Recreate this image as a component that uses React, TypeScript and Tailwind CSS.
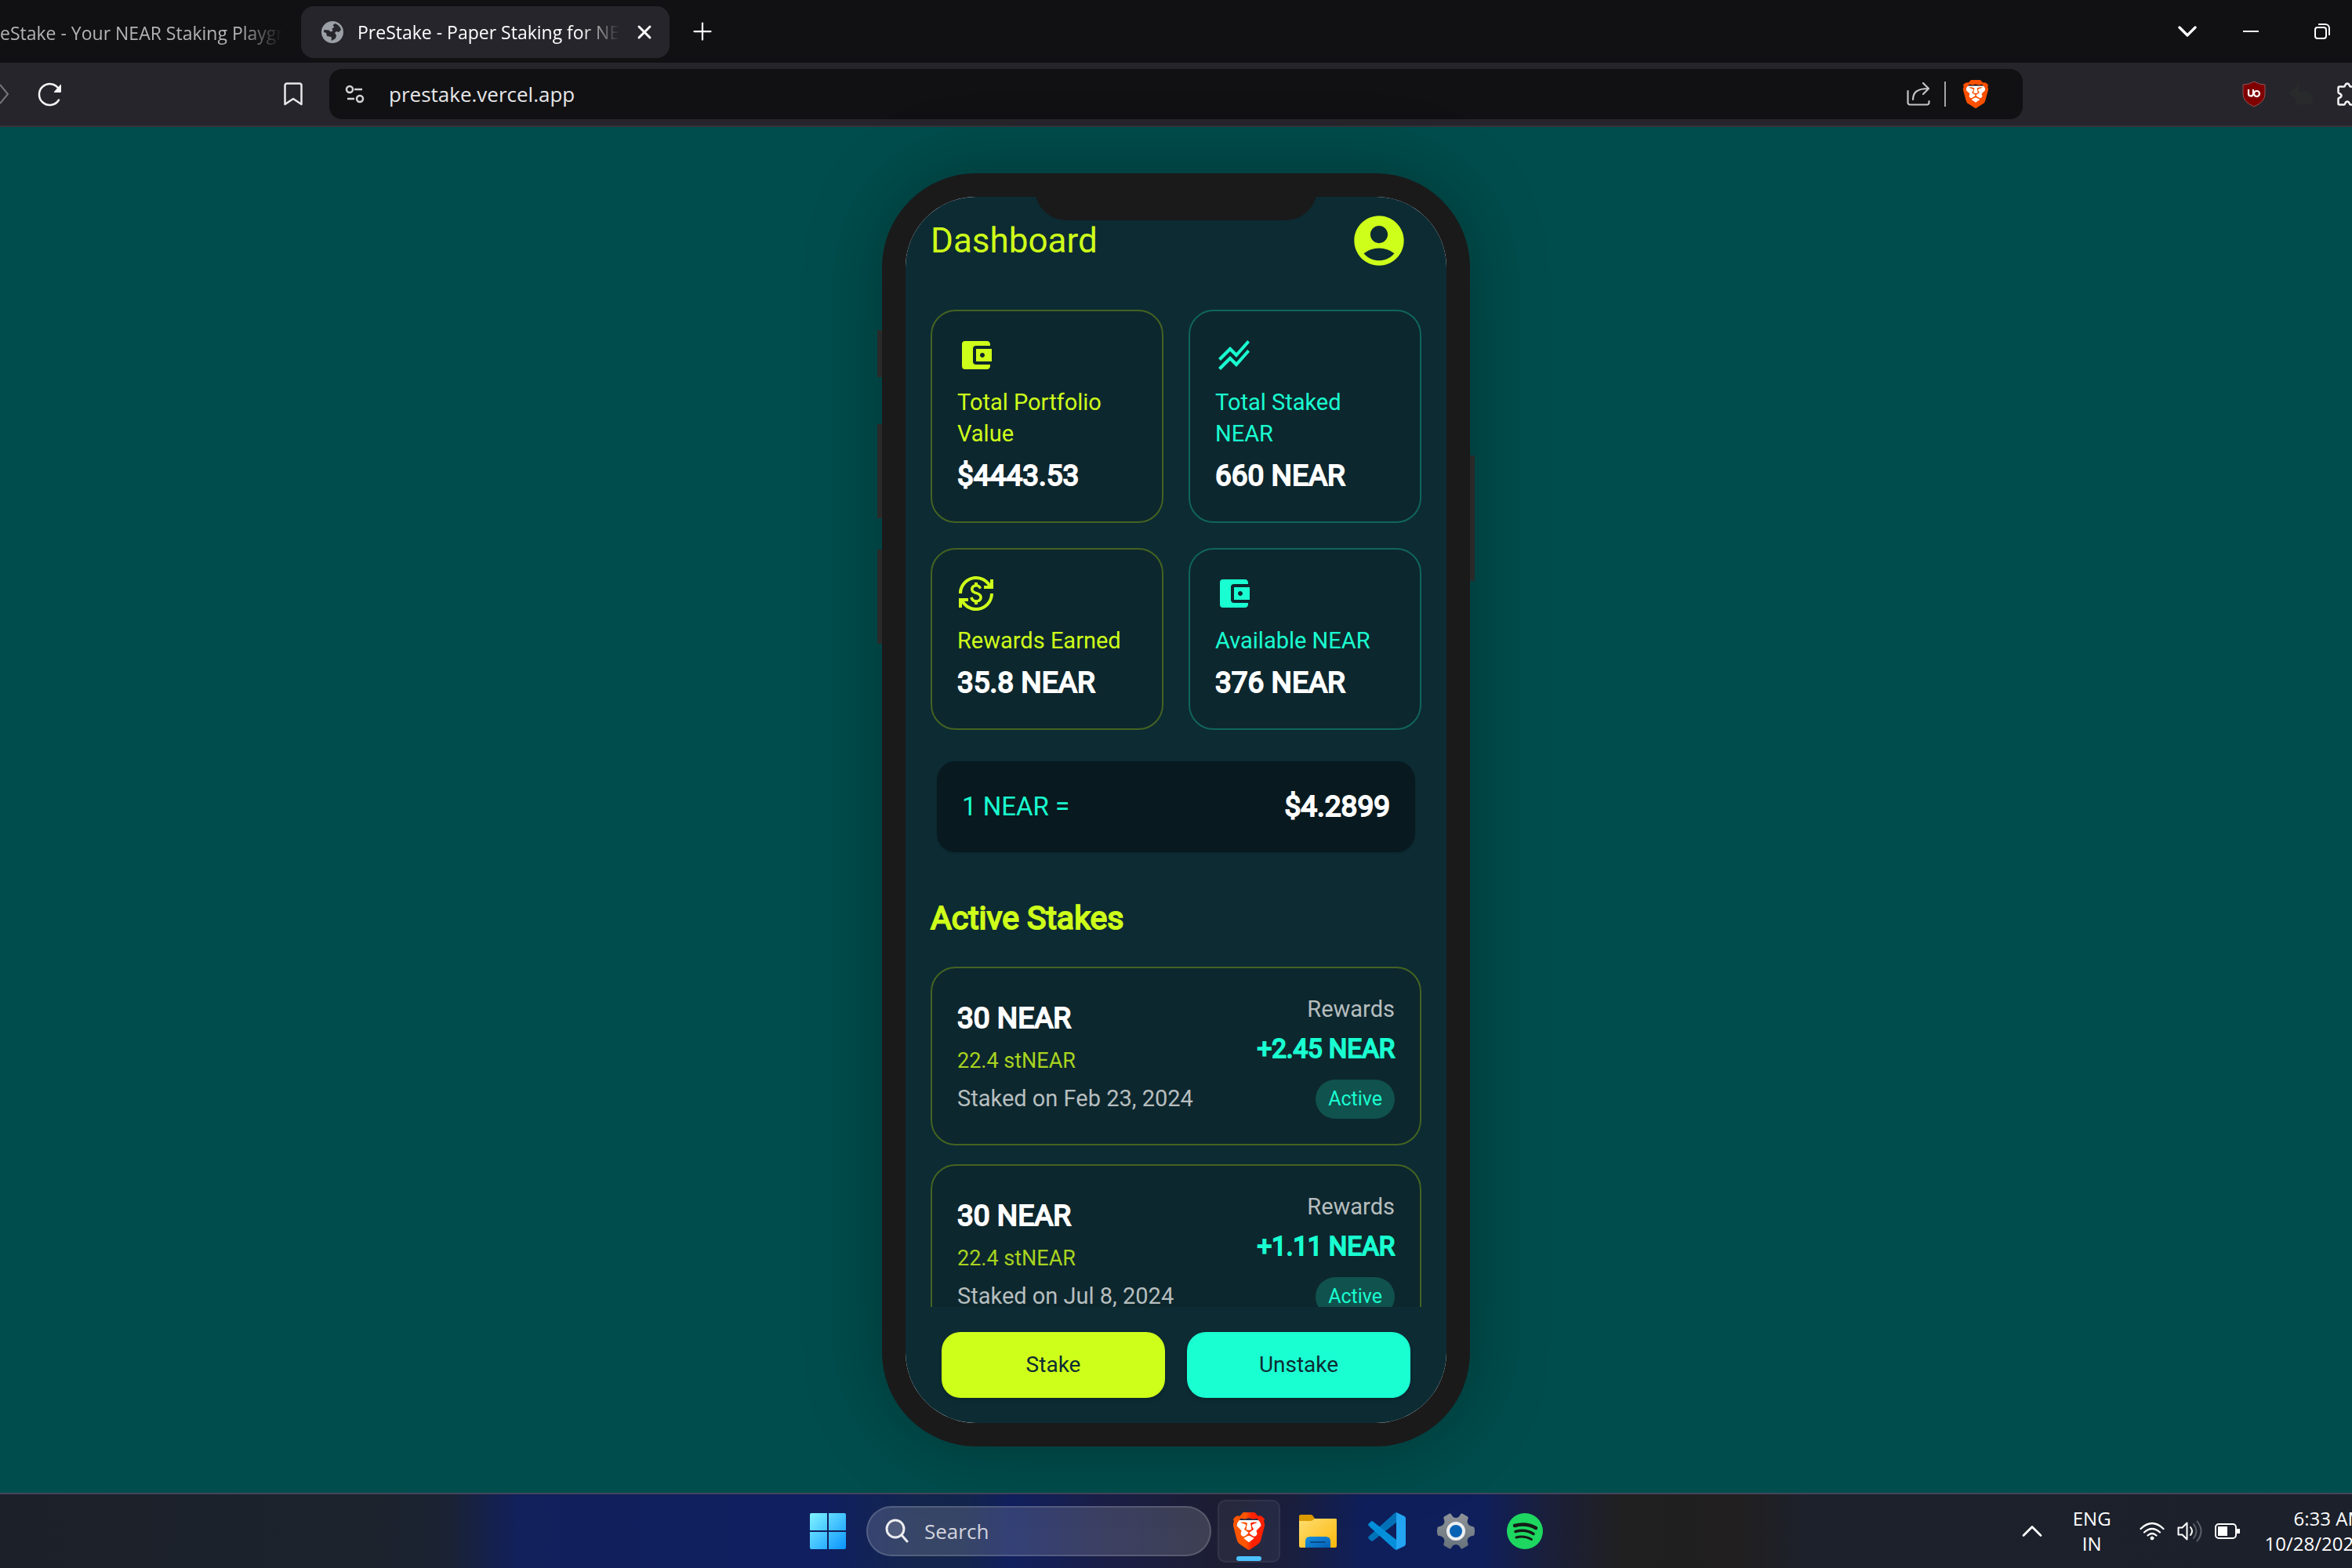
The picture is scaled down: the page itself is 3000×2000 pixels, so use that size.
import React from 'react';
import { MdAccountBalanceWallet, MdAccountCircle, MdCurrencyExchange, MdStackedLineChart } from 'react-icons/md';
import { SiBrave } from 'react-icons/si';
import { ChevronDown, ChevronUp, Plus, X } from 'lucide-react';

interface StatCardProps {
  icon: React.ReactNode;
  label: string;
  value: string;
  tone: 'lime' | 'aqua';
}

interface StakeCardProps {
  amount: string;
  staked: string;
  date: string;
  reward: string;
}

const tones = {
  lime: 'border-[#446322] text-[#ceff1a]',
  aqua: 'border-[#10655c] text-[#1affd1]',
};

const StatCard: React.FC<StatCardProps> = ({ icon, label, value, tone }) => (
  <div className={`rounded-[32px] border-2 bg-[#0d272e] p-8 ${tones[tone]}`}>
    <div className="mb-4">{icon}</div>
    <p className="text-[29px] leading-10">{label}</p>
    <p className="mt-2 text-[37px] leading-[52px] text-white [-webkit-text-stroke:2px]">{value}</p>
  </div>
);

const StakeCard: React.FC<StakeCardProps> = ({ amount, staked, date, reward }) => (
  <div className="flex items-center justify-between rounded-[32px] border-2 border-[#446322] bg-[#0d272e] p-8">
    <div className="flex flex-col gap-[10px]">
      <p className="text-[37px] leading-[52px] text-white [-webkit-text-stroke:2px]">{amount}</p>
      <p className="text-[27px] leading-9 text-[#a8d41f]">{staked}</p>
      <p className="text-[29px] leading-10 text-[#b6bebf]">{date}</p>
    </div>
    <div className="flex flex-col items-end">
      <p className="text-[29px] leading-10 text-[#b6bebf]">Rewards</p>
      <p className="mt-2 text-[33px] leading-[46px] text-[#1affd1] [-webkit-text-stroke:2px]">{reward}</p>
      <span className="mt-4 rounded-full bg-[#10524e] px-4 text-[25px] leading-[50px] text-[#1affd1]">Active</span>
    </div>
  </div>
);

const BraveLogo = ({ className, from, to }: { className: string; from: string; to: string }) => (
  <svg viewBox="2 0 20 24" preserveAspectRatio="none" className={className}>
    <defs>
      <linearGradient id={`brave-${to.slice(1)}`}>
        <stop offset="0.4" stopColor={from} />
        <stop offset="0.6" stopColor={to} />
      </linearGradient>
    </defs>
    <path fill="#fff" d="M5 5h14l1 4-3 8-5 4-5-4-3-8z" />
    <SiBrave size={24} fill={`url(#brave-${to.slice(1)})`} />
  </svg>
);

const GlobeIcon = () => (
  <svg viewBox="0 0 28 28" className="size-7 shrink-0">
    <circle cx="14" cy="14" r="14" fill="#9aa0a6" />
    <path
      fill="#26252b"
      d="M17 3c4 1 7 4 8 8l-3 3-3-1-2 2 2 3-1 4-5 3c-1-2 1-4-1-5l-5-1-1-4-3-1c0-1 0-2 .5-3l6 .5 2 2 3-1-1-3 3-2-2-2z"
    />
  </svg>
);

const TopBar = () => (
  <header className="bg-[#111113] text-white" style={{ fontFamily: '"Open Sans", sans-serif' }}>
    <div className="flex h-20 items-center">
      <a
        href="#playground"
        className="mt-1 mr-6 w-[360px] overflow-hidden mask-r-from-85% text-[23px] leading-8 whitespace-nowrap text-[#b3b3b5]"
      >
        eStake - Your NEAR Staking Playground
      </a>
      <div className="mt-[2px] flex h-[66px] w-[470px] items-center rounded-[16px] bg-[#26252b] pr-[18px] pl-[26px]">
        <GlobeIcon />
        <span className="ml-[18px] w-[334px] overflow-hidden mask-r-from-85% text-[23px] leading-8 whitespace-nowrap">
          PreStake - Paper Staking for NEAR
        </span>
        <button aria-label="Close tab" className="ml-auto">
          <X className="size-7" strokeWidth={2.5} />
        </button>
      </div>
      <button aria-label="New tab" className="ml-6">
        <Plus className="size-9" strokeWidth={1.5} />
      </button>
      <div className="ml-auto flex items-center pr-7">
        <button aria-label="Search tabs" className="mr-[51px]">
          <ChevronDown className="size-10" strokeWidth={2} />
        </button>
        <button aria-label="Minimize" className="mr-[71px] py-2">
          <span className="block h-[2px] w-5 bg-white" />
        </button>
        <button aria-label="Restore">
          <svg viewBox="0 0 20 20" className="size-5" fill="none" stroke="#fff" strokeWidth="2">
            <rect x="1" y="5" width="14" height="14" rx="3" />
            <path d="M5 1h9a5 5 0 0 1 5 5v9" />
          </svg>
        </button>
      </div>
    </div>

    <div className="flex h-[82px] items-center border-b-2 border-[#33323a] bg-[#26252b]">
      <button aria-label="Forward">
        <svg viewBox="0 0 12 28" className="h-7 w-3" fill="none" stroke="#77767c" strokeWidth="2">
          <path d="M0 2l10 12L0 26" />
        </svg>
      </button>
      <button aria-label="Reload" className="ml-9">
        <svg viewBox="0 0 32 32" className="size-8" fill="none" stroke="#f4f4f5" strokeWidth="2.500" strokeLinecap="round">
          <path d="M27 23.500a13.500 13.500 0 1 1 0-14" />
          <path d="M30 5v8q0 1-1 1h-7q-2 0-1-1l8-9q1-1 1 1z" fill="#f4f4f5" stroke="none" />
        </svg>
      </button>
      <button aria-label="Bookmark" className="ml-[282px]">
        <svg viewBox="0 0 24 30" className="h-[30px] w-6" fill="none" stroke="#e8e8ea" strokeWidth="2.500">
          <path d="M4 1.500h16a2.500 2.500 0 0 1 2.500 2.500v24L12 21 1.500 28V4A2.500 2.500 0 0 1 4 1.500z" strokeLinejoin="round" />
        </svg>
      </button>
      <div className="ml-[34px] flex h-16 w-[2160px] items-center rounded-[16px] bg-[#111113] pr-11 pl-5">
        <button aria-label="Site settings">
          <svg viewBox="0 0 26 24" className="h-6 w-[26px]" fill="none" stroke="#d4d4d6" strokeWidth="2.500">
            <circle cx="6" cy="6" r="4" />
            <path d="M12 6h10M3 18h9" />
            <circle cx="19" cy="18" r="4" />
          </svg>
        </button>
        <input
          aria-label="Address"
          defaultValue="prestake.vercel.app"
          className="ml-[30px] min-w-0 flex-1 bg-transparent text-[26px] leading-9 text-[#e6e6e8] outline-none"
        />
        <button aria-label="Share">
          <svg viewBox="0 0 30 30" className="size-[30px]" fill="none" stroke="#c4c4c6" strokeWidth="2.200" strokeLinecap="round" strokeLinejoin="round">
            <path d="M1.500 11v15a2.500 2.500 0 0 0 2.500 2.500h22a2.500 2.500 0 0 0 2.500-2.500v-2" />
            <path d="M8 22c0-9 5-14 19.500-14M21 1l7 7-7 7" />
          </svg>
        </button>
        <span className="mx-[18px] h-8 w-[2px] bg-[#a4a4a6]" />
        <button aria-label="Brave Shields" className="ml-1">
          <BraveLogo className="h-9 w-8" from="#ff5000" to="#fb4f00" />
        </button>
      </div>
      <div className="ml-auto flex items-center">
        <button aria-label="uBlock Origin" className="mr-[30px]">
          <svg viewBox="0 0 30 34" className="h-[34px] w-[30px]">
            <path d="M15 1q7 4 14 4v12q0 10-14 16Q1 27 1 17V5q7 0 14-4z" fill="#800000" stroke="#8d5558" />
            <g fill="none" stroke="#fff" strokeWidth="2.200">
              <path d="M8 11v5.500a3 3 0 0 0 6 0V11" />
              <circle cx="18.500" cy="16.500" r="3.500" />
            </g>
          </svg>
        </button>
        <button aria-label="Rabbit" className="mr-[29px]">
          <svg viewBox="0 0 32 30" className="h-[30px] w-8" fill="#292a2b">
            <path d="M8 8l4-8 2 1-2 9c4 4 6 2 10 2 6 1 9 5 8 10l-1 6H12l-4 2 1-8-3-3-6-4c1-4 4-6 8-7z" />
          </svg>
        </button>
        <button aria-label="Extensions" className="w-[19px] overflow-hidden">
          <svg viewBox="0 0 30 30" className="size-[30px]" fill="none" stroke="#f2f2f3" strokeWidth="2.500" strokeLinejoin="round">
            <path d="M3 5.500h6c1.500 0 1-4 4-4s2.500 4 4 4h7v7c0 1.500 4 1 4 4s-4 2.500-4 4v8h-7c-1.500 0-1-4-4-4s-2.500 4-4 4H3a1.500 1.500 0 0 1-1.500-1.500V21c0-1.500 4-1 4-4s-4-2.500-4-4V7A1.500 1.500 0 0 1 3 5.500z" />
          </svg>
        </button>
      </div>
    </div>
  </header>
);

const Phone = () => (
  <div
    className="relative h-[1624px] w-[750px] rounded-[120px] shadow-[0_0_100px_rgba(0,0,0,0.3)]"
    style={{ fontFamily: 'Roboto, sans-serif' }}
  >
    {/* Side buttons */}
    <span className="absolute top-[200px] -left-[6px] h-[60px] w-[6px] bg-[#2a2a2a]" />
    <span className="absolute top-[320px] -left-[6px] h-[120px] w-[6px] bg-[#2a2a2a]" />
    <span className="absolute top-[480px] -left-[6px] h-[120px] w-[6px] bg-[#2a2a2a]" />
    <span className="absolute top-[360px] -right-[6px] h-[160px] w-[6px] bg-[#2a2a2a]" />

    <div className="h-full rounded-[120px] border-[30px] border-[#1a1a1a] bg-white">
      <div className="flex h-full flex-col overflow-hidden rounded-[90px] bg-[#0d2b33]">
        <div className="min-h-0 flex-1 overflow-hidden px-8">
          <div className="flex h-28 items-center justify-between pr-4">
            <h1 className="text-[44px] leading-[60px] text-[#ceff1a]">Dashboard</h1>
            <button aria-label="Account" className="text-[#ceff1a]">
              <MdAccountCircle className="size-[76px]" />
            </button>
          </div>

          <div className="mt-8 grid grid-cols-2 gap-8">
            <StatCard tone="lime" icon={<MdAccountBalanceWallet className="size-12" />} label="Total Portfolio Value" value="$4443.53" />
            <StatCard tone="aqua" icon={<MdStackedLineChart className="size-12" />} label="Total Staked NEAR" value="660 NEAR" />
            <StatCard tone="lime" icon={<MdCurrencyExchange className="size-12" />} label="Rewards Earned" value="35.8 NEAR" />
            <StatCard tone="aqua" icon={<MdAccountBalanceWallet className="size-12" />} label="Available NEAR" value="376 NEAR" />
          </div>

          <div className="mx-2 mt-10 flex h-[116px] items-center justify-between rounded-[24px] bg-[#081a1f] px-8 shadow-sm">
            <span className="text-[33px] leading-[52px] text-[#1affd1]">1 NEAR =</span>
            <span className="text-[37px] leading-[52px] text-white [-webkit-text-stroke:2px]">$4.2899</span>
          </div>

          <h2 className="mt-14 mb-[34px] text-[41px] leading-[56px] text-[#ceff1a] [-webkit-text-stroke:2px]">Active Stakes</h2>
          <div className="flex flex-col gap-6">
            <StakeCard amount="30 NEAR" staked="22.4 stNEAR" date="Staked on Feb 23, 2024" reward="+2.45 NEAR" />
            <StakeCard amount="30 NEAR" staked="22.4 stNEAR" date="Staked on Jul 8, 2024" reward="+1.11 NEAR" />
          </div>
        </div>

        <div className="grid grid-cols-2 gap-7 px-[46px] py-8 text-[28px] text-[#0d2b33]">
          <button className="h-[84px] rounded-[24px] bg-[#ceff1a] shadow-md">Stake</button>
          <button className="h-[84px] rounded-[24px] bg-[#1affd1] shadow-md">Unstake</button>
        </div>
      </div>
    </div>

    {/* Notch */}
    <span className="absolute top-0 left-1/2 h-[60px] w-[360px] -translate-x-1/2 rounded-b-[40px] bg-[#1a1a1a]" />
  </div>
);

const WindowsLogo = () => (
  <svg viewBox="0 0 46 46" className="size-[46px]">
    <defs>
      <linearGradient id="win" x1="0" y1="0" x2="46" y2="46" gradientUnits="userSpaceOnUse">
        <stop stopColor="#80f4ff" />
        <stop offset="1" stopColor="#0a94ff" />
      </linearGradient>
    </defs>
    <path fill="url(#win)" d="M2 0h20v22H0V2a2 2 0 0 1 2-2zM24 0h20a2 2 0 0 1 2 2v20H24zM0 24h22v22H2a2 2 0 0 1-2-2zM24 24h22v20a2 2 0 0 1-2 2H24z" />
  </svg>
);

const FolderIcon = () => (
  <svg viewBox="0 0 48 42" className="h-[42px] w-12">
    <defs>
      <linearGradient id="fold" x1="0" y1="0" x2="1" y2="1">
        <stop stopColor="#ffdf72" />
        <stop offset="1" stopColor="#fdb70c" />
      </linearGradient>
      <linearGradient id="tray" x1="0" y1="0" x2="1" y2="1">
        <stop stopColor="#1590e0" />
        <stop offset="1" stopColor="#0560b4" />
      </linearGradient>
    </defs>
    <path d="M2 0h13q2 0 3 2l2 3h27q1 0 1 2v8H0V2q0-2 2-2z" fill="#dd9c00" />
    <path d="M0 8h15q2 0 5-3h26q2 0 2 2v33q0 2-2 2H2q-2 0-2-2z" fill="url(#fold)" />
    <path d="M8 42V34q0-6 6-6h20q6 0 6 6v8z" fill="url(#tray)" />
    <path d="M15 35h18" stroke="#0a4a86" strokeWidth="2" strokeLinecap="round" />
  </svg>
);

const VsCodeIcon = () => (
  <svg viewBox="0 0 48 48" className="size-12">
    <path d="M1 30.500L34 .8 36 0v13L6 36.500q-1 .8-2 0L1 34q-1.500-2 0-3.500z" fill="#0072b8" />
    <path d="M1 17.500L34 47.200l2 .8V35L6 11.500q-1-.8-2 0L1 14q-1.500 2 0 3.500z" fill="#058fdb" />
    <path d="M36 0l10.500 5q1.500 1 1.500 3v32q0 2-1.500 3L36 48z" fill="#23a5f2" />
  </svg>
);

const GearIcon = () => (
  <svg viewBox="0 0 48 46" className="h-[46px] w-12">
    <defs>
      <linearGradient id="gear" x1="0" y1="0" x2="0" y2="1">
        <stop stopColor="#8f9499" />
        <stop offset="1" stopColor="#66727b" />
      </linearGradient>
    </defs>
    <path
      fill="url(#gear)"
      d="M16 .5L9 4.500q-1 1-.5 2.500l1 3.500Q9 16 3 17q-2 0-2.500 1.500Q-.5 23 .5 27.500 1 29 3 29q6 1 6.500 6.500l-1 3.500q-.5 1.500.5 2.500l7 4q1 .5 2-1l2-3q4-3 8 0l2 3q1 1.500 2 1l7-4q1-1 .5-2.500l-1-3.500Q39 30 45 29q2 0 2.500-1.500 1-4.500 0-9Q47 17 45 17q-6-1-6.500-6.500l1-3.500q.5-1.500-.5-2.500l-7-4q-1-.5-2 1l-2 3q-4 3-8 0l-2-3q-1-1.500-2-1z"
    />
    <circle cx="24" cy="23" r="10" fill="#0963b5" stroke="#eceff1" strokeWidth="4" />
  </svg>
);

const SpotifyIcon = () => (
  <svg viewBox="0 0 46 46" className="size-[46px]" fill="none" stroke="#141b17" strokeLinecap="round">
    <circle cx="23" cy="23" r="23" fill="#1ed760" stroke="none" />
    <path d="M10 16q15-4 27 3" strokeWidth="4.500" />
    <path d="M11 23.500q13-3.500 23 3" strokeWidth="3.500" />
    <path d="M12 31q10-3 19.500 2.500" strokeWidth="3" />
  </svg>
);

const taskApps = [
  { name: 'File Explorer', icon: <FolderIcon /> },
  { name: 'Visual Studio Code', icon: <VsCodeIcon /> },
  { name: 'Settings', icon: <GearIcon /> },
  { name: 'Spotify', icon: <SpotifyIcon /> },
];

const TaskBar = () => (
  <footer
    className="grid h-24 grid-cols-[1fr_auto_1fr] items-center border-t-2 border-[#43465c] bg-[linear-gradient(90deg,#1c2029_0%,#1c232d_16%,#1a2233_19%,#12205c_22%,#101f60_35%,#14264d_39%,#14254d_41%,#11205f_43%,#1b1f47_47%,#1d1e33_52%,#1a1f3e_55%,#0f1f5c_58%,#0f1f5c_63%,#1b1f38_66%,#202020_69%,#211f20_74%,#1c212c_77%,#1c202b_100%)] text-white"
    style={{ fontFamily: '"Open Sans", sans-serif' }}
  >
    <div />
    <div className="flex items-center gap-2">
      <button aria-label="Start" className="flex w-[82px] justify-center">
        <WindowsLogo />
      </button>
      <label className="flex h-16 w-[440px] items-center rounded-full border-2 border-white/15 bg-white/15 pl-[22px]">
        <svg viewBox="0 0 30 32" className="h-8 w-[30px] shrink-0" fill="none" stroke="#ededf0" strokeWidth="3" strokeLinecap="round">
          <circle cx="13" cy="13" r="11" fill="#ffffff20" />
          <path d="M21 21l7 8" />
        </svg>
        <input
          aria-label="Search"
          placeholder="Search"
          className="ml-5 w-60 bg-transparent text-[26px] leading-9 outline-none placeholder:text-[#d3d4de]"
        />
      </label>
      <button aria-label="Brave" className="relative flex size-20 items-center justify-center rounded-[10px] border-2 border-white/5 bg-white/5">
        <BraveLogo className="h-12 w-10" from="#ff5500" to="#ff2000" />
        <span className="absolute bottom-0 left-1/2 h-[6px] w-8 -translate-x-1/2 rounded-full bg-[#4cc2ff]" />
      </button>
      {taskApps.map((app) => (
        <button key={app.name} aria-label={app.name} className="flex size-20 items-center justify-center">
          {app.icon}
        </button>
      ))}
    </div>
    <div className="flex items-center justify-end overflow-hidden text-[24px] leading-8 whitespace-nowrap">
      <button aria-label="Show hidden icons" className="mr-[30px]">
        <ChevronUp className="size-11" strokeWidth={1.5} />
      </button>
      <button className="mr-9 text-center">
        ENG
        <br />
        IN
      </button>
      <button aria-label="Network and battery" className="mr-8 flex items-center gap-4">
        <svg viewBox="0 0 32 24" className="h-6 w-8" fill="none" stroke="#fff" strokeWidth="2.200" strokeLinecap="round">
          <path d="M1.500 9q14.500-14 29 0M6 13.500q10-9 20 0M10.500 17.500q5.500-5 11 0" />
          <circle cx="16" cy="21" r="2" fill="#fff" strokeWidth="1" />
        </svg>
        <svg viewBox="0 0 32 28" className="h-7 w-8" fill="none" stroke="#fff" strokeWidth="2" strokeLinecap="round">
          <path d="M1.500 9.500h5l6-6v21l-6-6h-5z" strokeLinejoin="round" />
          <path d="M17 9q4 5 0 10" />
          <path d="M21 5q7 9 0 18M25.500 1.500q10 12.500 0 25" stroke="#5b5f68" />
        </svg>
        <svg viewBox="0 0 32 20" className="h-5 w-8" fill="none" stroke="#fff" strokeWidth="2">
          <rect x="1" y="1" width="26" height="18" rx="4" />
          <path d="M4 4h12v12H4zM28 7h4v6h-4z" fill="#fff" stroke="none" />
        </svg>
      </button>
      <button className="-mr-4 text-right">
        6:33 AM
        <br />
        10/28/2024
      </button>
    </div>
  </footer>
);

const App: React.FC = () => (
  <div className="flex min-h-screen flex-col bg-[#004d4d]">
    <TopBar />
    <main className="flex flex-1 items-center justify-center">
      <Phone />
    </main>
    <TaskBar />
  </div>
);

export default App;
